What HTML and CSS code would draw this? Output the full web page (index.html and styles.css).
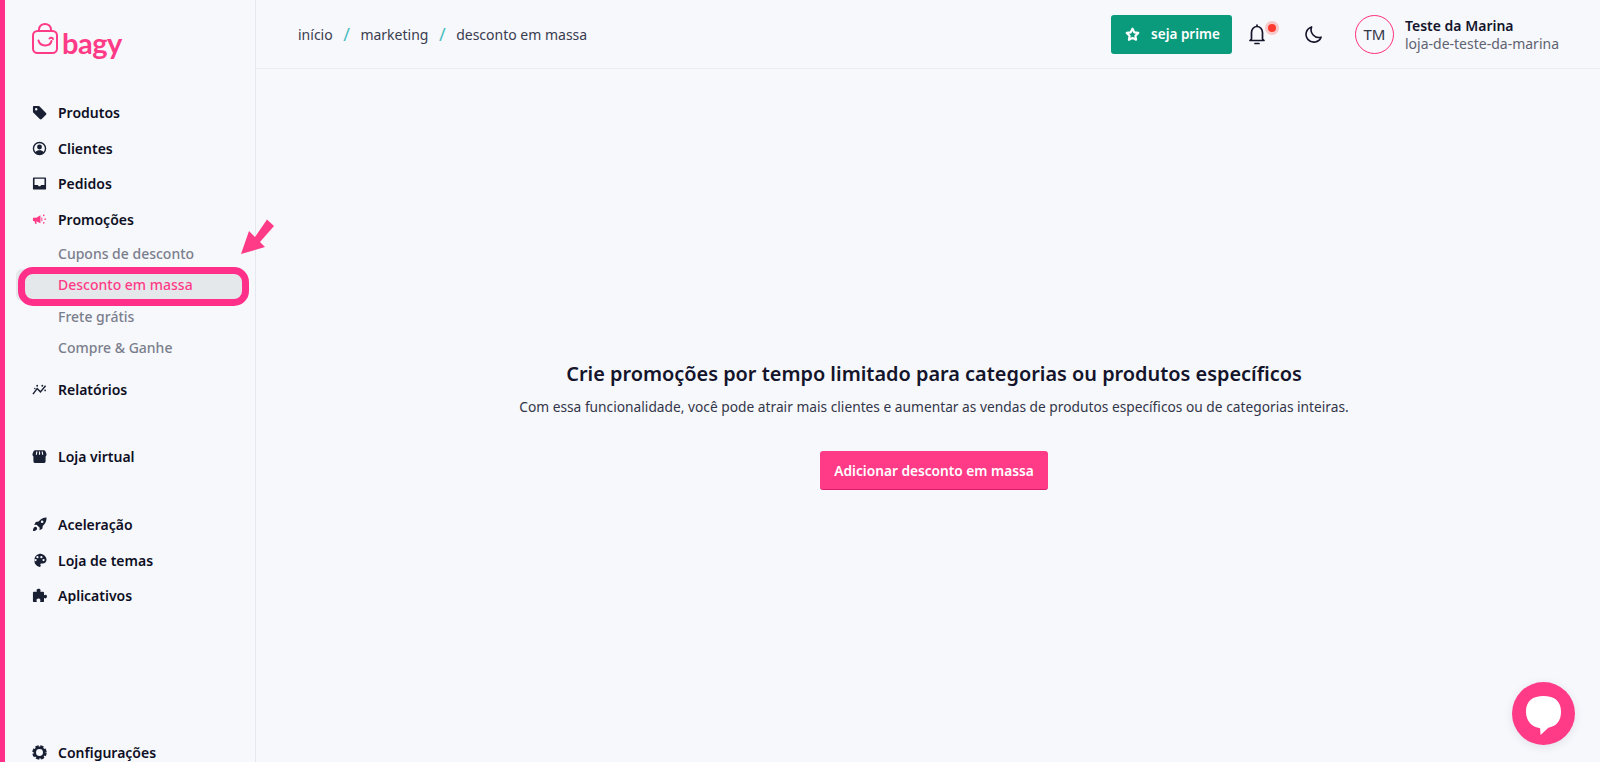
FILE: index.html
```html
<!DOCTYPE html>
<html lang="pt-BR">
<head>
<meta charset="utf-8">
<title>Desconto em massa</title>
<link rel="stylesheet" href="styles.css">
</head>
<body>
<div class="app">
  <aside class="sidebar">
    <div class="logo">
      <svg class="logo-bag" viewBox="0 0 26 31" fill="none" stroke="currentColor" stroke-width="2" stroke-linecap="round">
        <rect x="1" y="8" width="24" height="22" rx="4.5"/>
        <path d="M7 8V6.5a6 5.5 0 0 1 12 0V8"/>
        <path d="M6.5 17.5c1.5 6.5 11.500 6.500 13 .5"/>
        <path d="M17.500 15.500a2 2 0 0 1 3.500.5"/>
      </svg>
      <span class="logo-word">bagy</span>
    </div>

    <nav class="nav-group">
      <a class="nav-item">
        <svg class="nav-icon" viewBox="0 0 16 16"><path fill-rule="evenodd" d="M1.800 1h5a1.500 1.500 0 0 1 1.100.4l7 7a1.500 1.500 0 0 1 0 2.100l-4.500 4.500a1.500 1.500 0 0 1-2.100 0l-7-7A1.500 1.500 0 0 1 1 6.900V1.800A.8.8 0 0 1 1.800 1zM4.500 3.200a1.300 1.300 0 1 0 0 2.600 1.300 1.300 0 0 0 0-2.600z"/></svg>
        Produtos
      </a>
      <a class="nav-item">
        <svg class="nav-icon" viewBox="0 0 16 16"><path fill-rule="evenodd" d="M8 .8a7.200 7.200 0 1 1 0 14.400A7.200 7.200 0 0 1 8 .8zm0 1.600a5.600 5.600 0 0 0-4.300 9.200C4.600 10.400 6.200 9.800 8 9.800s3.400.6 4.300 1.800A5.600 5.600 0 0 0 8 2.400zm0 1.400a2.600 2.600 0 1 1 0 5.200 2.600 2.600 0 0 1 0-5.200z"/></svg>
        Clientes
      </a>
      <a class="nav-item">
        <svg class="nav-icon" viewBox="0 0 16 16"><path fill-rule="evenodd" d="M2 1.500h12a1 1 0 0 1 1 1v11a1 1 0 0 1-1 1H2a1 1 0 0 1-1-1v-11a1 1 0 0 1 1-1zM2.700 3v6.500h3.500l1 1.500h1.600l1-1.500h3.500V3z"/></svg>
        Pedidos
      </a>
      <a class="nav-item">
        <svg class="nav-icon nav-icon-pink" viewBox="0 0 16 16"><path d="M1 6h3.500L9 3.500v8.500L4.500 9.800l.6 2.700H3.300l-.7-2.800H1zM10 5.500l1 .5v3.500l-1 .5z"/><circle cx="12.500" cy="3.500" r=".9"/><circle cx="14" cy="7.500" r=".9"/><circle cx="12.500" cy="11.500" r=".9"/></svg>
        Promoções
      </a>
      <div class="sub-list">
        <a class="sub-item">Cupons de desconto</a>
        <a class="sub-item sub-item-active">Desconto em massa</a>
        <a class="sub-item">Frete grátis</a>
        <a class="sub-item">Compre &amp; Ganhe</a>
      </div>
      <a class="nav-item nav-item-after-sub">
        <svg class="nav-icon" viewBox="0 0 16 16"><path d="M1 13l4.500-6 3.500 3.500L14.500 4" fill="none" stroke="currentColor" stroke-width="1.500"/><circle cx="5.500" cy="4" r="1"/><circle cx="11" cy="4" r="1"/><circle cx="3" cy="7" r=".8"/><circle cx="14" cy="9" r=".9"/></svg>
        Relatórios
      </a>
    </nav>

    <nav class="nav-group nav-group-spaced">
      <a class="nav-item">
        <svg class="nav-icon" viewBox="0 0 16 16"><path fill-rule="evenodd" d="M3.500 1.200h9a2 2 0 0 1 1.800 1.200l1.200 3a2.300 2.300 0 0 1-1 2.500V13a2 2 0 0 1-2 2h-9a2 2 0 0 1-2-2V7.900a2.300 2.300 0 0 1-1-2.500l1.200-3a2 2 0 0 1 1.800-1.200zM4.500 2.600L4 6h1.300l.4-3.400zM7.400 2.600V6h1.200V2.600zM10.300 2.600l.4 3.400H12l-.5-3.400z"/></svg>
        Loja virtual
      </a>
    </nav>

    <nav class="nav-group nav-group-wide">
      <a class="nav-item">
        <svg class="nav-icon" viewBox="0 0 16 16"><path fill-rule="evenodd" d="M15.500.6c.2 3.500-1 6.500-4 9l-.5 3-3 1.600.2-2.700-3.300-3.300-2.500.2L4 5.400l3-.5C9.500 1.900 12.300.5 15.500.6zM10.800 3.700a1.400 1.400 0 1 0 0 2.800 1.400 1.400 0 0 0 0-2.800z"/><path d="M3.500 10.500a2 2 0 0 1 2 2c-.3 1.700-2.500 2.500-4.500 2.500 0-2 .8-4.200 2.500-4.500z"/></svg>
        Aceleração
      </a>
      <a class="nav-item">
        <svg class="nav-icon" viewBox="0 0 16 16"><path fill-rule="evenodd" d="M8 .8c4.200 0 7.500 2.900 7.500 6.500 0 2.500-2 3.900-4 3.900H9.800c-.8 0-1.200.9-.7 1.500.5.700.2 2.100-1.100 2.100a7.200 7.200 0 0 1 0-14zM3.800 6.300a1.200 1.200 0 1 0 0 2.400 1.200 1.200 0 0 0 0-2.400zM5.800 3.200a1.200 1.200 0 1 0 0 2.400 1.200 1.200 0 0 0 0-2.400zM10 3.200a1.200 1.200 0 1 0 0 2.400 1.200 1.200 0 0 0 0-2.400zM12.300 6.300a1.200 1.200 0 1 0 0 2.400 1.200 1.200 0 0 0 0-2.400z"/></svg>
        Loja de temas
      </a>
      <a class="nav-item">
        <svg class="nav-icon" viewBox="0 0 16 16"><path d="M6 1c1.500-.7 3.200 0 3.200 1.400 0 .6-.4 1-.4 1.600h3c.6 0 1 .4 1 1v2.600c.5 0 .9-.4 1.500-.4 1.300 0 1.900 1.200 1.600 2.500-.3 1.400-1.900 1.800-2.800 1-.1 0-.3 0-.3.200V14c0 .6-.4 1-1 1H8.500c0-.6.500-1 .5-1.800 0-1.400-1.100-2-2.200-2S4.800 12 4.800 13.200c0 .7.400 1.200.5 1.800H2c-.6 0-1-.4-1-1V5c0-.6.400-1 1-1h3.200c0-.6-.4-1-.4-1.500 0-.6.600-1.200 1.200-1.500z"/></svg>
        Aplicativos
      </a>
    </nav>

    <nav class="nav-group nav-group-bottom">
      <a class="nav-item">
        <svg class="nav-icon" viewBox="0 0 16 16"><circle cx="8" cy="8" r="5" fill="none" stroke="currentColor" stroke-width="2.600"/><circle cx="8" cy="8" r="6.500" fill="none" stroke="currentColor" stroke-width="2.400" stroke-dasharray="3.500 1.605"/></svg>
        Configurações
      </a>
    </nav>
  </aside>

  <div class="main">
    <header class="topbar">
      <ol class="breadcrumb">
        <li>início</li>
        <li class="crumb-sep">/</li>
        <li>marketing</li>
        <li class="crumb-sep">/</li>
        <li>desconto em massa</li>
      </ol>
      <div class="topbar-actions">
        <a class="prime-button">
          <svg class="prime-icon" viewBox="0 0 16 16" fill="none" stroke="currentColor" stroke-width="2.300" stroke-linejoin="round"><path d="M8 1.800l1.900 3.900 4.300.6-3.100 3 .7 4.300L8 11.600l-3.800 2 .7-4.300-3.100-3 4.300-.6z"/></svg>
          seja prime
        </a>
        <span class="bell">
          <svg class="bell-icon" viewBox="0 0 18 22" fill="none" stroke="currentColor" stroke-width="1.700" stroke-linecap="round" stroke-linejoin="round"><path d="M9 2v1.500M3.500 16V9.500a5.500 6 0 0 1 11 0V16l1.500 1.500H2z"/><path d="M7 20.500h4"/></svg>
          <span class="bell-dot"></span>
        </span>
        <svg class="moon-icon" viewBox="0 0 20 20" fill="none" stroke="currentColor" stroke-width="1.700" stroke-linejoin="round"><path d="M8 2a8.200 8.200 0 0 0 10 10.800A8.200 8.200 0 1 1 8 2z"/></svg>
        <div class="account">
          <span class="avatar">TM</span>
          <div class="account-text">
            <span class="account-name">Teste da Marina</span>
            <span class="account-store">loja-de-teste-da-marina</span>
          </div>
        </div>
      </div>
    </header>

    <main class="content">
      <h1 class="empty-title">Crie promoções por tempo limitado para categorias ou produtos específicos</h1>
      <p class="empty-text">Com essa funcionalidade, você pode atrair mais clientes e aumentar as vendas de produtos específicos ou de categorias inteiras.</p>
      <a class="add-button">Adicionar desconto em massa</a>
    </main>
  </div>
</div>

<svg class="arrow" viewBox="0 0 40 40"><polygon points="1,36 9,13 15,19 27,1.500 34,8 20,24 25,29"/></svg>

<div class="chat-bubble">
  <svg class="chat-icon" viewBox="0 0 38 42"><path d="M19 1c11 0 18 5 18 16 0 9-4 15-13 16.500l-8 7.500-.5-7C7 33 1 27 1 17 1 6 8 1 19 1z"/></svg>
</div>
</body>
</html>
```

FILE: styles.css
```css
* { box-sizing: border-box; }

html, body {
  margin: 0;
  height: 100%;
  overflow: hidden;
}

body {
  background: #f6f8fc;
  color: #14142b;
  font-family: "Noto Sans", "Open Sans", sans-serif;
  font-size: 14px;
}

.app {
  display: flex;
  height: 762px;
}

.sidebar {
  display: flex;
  flex-direction: column;
  flex: 0 0 256px;
  height: 762px;
  overflow: hidden;
  padding-left: 27px;
  background: #f6f8fc;
  border-left: 5px solid #ff2f8a;
  border-right: 1px solid #e5e8ee;
}

.logo {
  display: flex;
  flex: none;
  align-items: flex-start;
  gap: 4px;
  height: 95px;
  padding-top: 23px;
  color: #ff3b87;
}

.logo-bag {
  width: 26px;
  height: 31px;
  flex: none;
}

.logo-word {
  margin-top: 2px;
  font-family: "Lato", sans-serif;
  font-size: 29px;
  font-weight: 700;
  line-height: 36px;
  letter-spacing: -0.5px;
}

.nav-group {
  display: flex;
  flex-direction: column;
  flex: none;
}

.nav-group-spaced { margin-top: 31px; }
.nav-group-wide { margin-top: 33px; }
.nav-group-bottom { margin-top: 121px; }

.nav-item {
  display: flex;
  align-items: center;
  gap: 11px;
  height: 35.5px;
  font-weight: 600;
  color: #0f0f24;
}

.nav-item-after-sub { margin-top: 9px; }

.nav-icon {
  width: 15px;
  height: 15px;
  flex: none;
  fill: #1a2033;
  color: #1a2033;
}

.nav-icon-pink { fill: #ff3b87; }

.sub-list {
  display: flex;
  flex-direction: column;
  margin-top: 1px;
}

.sub-item {
  display: flex;
  align-items: center;
  height: 31.3px;
  padding-left: 26px;
  color: #7b7e8c;
  font-weight: 500;
}

.sub-item-active {
  position: relative;
  margin-left: -16px;
  margin-right: 9px;
  padding-left: 42px;
  border-radius: 6px;
  background: #e5e8eb;
  color: #ff3b87;
}

.sub-item-active::after {
  content: "";
  position: absolute;
  top: -2px;
  right: -3px;
  bottom: -5px;
  left: 2px;
  border: 7px solid #ff2f8a;
  border-radius: 15px;
}

.main {
  display: flex;
  flex-direction: column;
  flex: 1;
  min-width: 0;
}

.topbar {
  display: flex;
  align-items: center;
  justify-content: space-between;
  flex: 0 0 69px;
  padding: 0 41px 0 42px;
  border-bottom: 1px solid #e9ecf1;
}

.breadcrumb {
  display: flex;
  align-items: center;
  gap: 10.5px;
  margin: 0;
  padding: 0;
  list-style: none;
  color: #3a3c50;
}

.crumb-sep {
  color: #4bbdc0;
  font-size: 18px;
}

.topbar-actions {
  display: flex;
  align-items: center;
}

.prime-button {
  display: flex;
  align-items: center;
  justify-content: center;
  gap: 11px;
  width: 121px;
  height: 39px;
  padding-left: 2px;
  border-radius: 3px;
  background: #0a9b7d;
  color: #ffffff;
  font-size: 13.500px;
  font-weight: 600;
}

.prime-icon {
  width: 15px;
  height: 15px;
}

.bell {
  position: relative;
  display: flex;
  margin-left: 16px;
  color: #14142b;
}

.bell-icon {
  width: 18px;
  height: 22px;
}

.bell-dot {
  position: absolute;
  top: 1px;
  left: 20px;
  width: 8px;
  height: 8px;
  border-radius: 50%;
  background: #ff3b2f;
  box-shadow: 0 0 0 3px rgba(255, 59, 47, 0.25);
}

.moon-icon {
  width: 19px;
  height: 19px;
  margin-left: 38px;
  color: #14142b;
}

.account {
  display: flex;
  align-items: center;
  gap: 11px;
  margin-left: 32px;
}

.avatar {
  display: flex;
  align-items: center;
  justify-content: center;
  width: 39px;
  height: 39px;
  border: 1.500px solid #ff2f78;
  border-radius: 50%;
  color: #333648;
  font-size: 15px;
}

.account-text {
  display: flex;
  flex-direction: column;
}

.account-name {
  font-weight: 600;
  line-height: 18px;
}

.account-store {
  color: #5f6270;
  line-height: 17px;
}

.content {
  display: flex;
  flex-direction: column;
  align-items: center;
  flex: 1;
  padding: 292px 0 0 12px;
}

.empty-title {
  margin: 0;
  font-size: 19.900px;
  font-weight: 600;
  line-height: 26px;
  color: #14142b;
}

.empty-text {
  margin: 10px 0 0;
  color: #333648;
  font-size: 13.760px;
  line-height: 20px;
}

.add-button {
  display: flex;
  align-items: center;
  justify-content: center;
  width: 228px;
  height: 39px;
  margin-top: 34px;
  border-radius: 3px;
  border-bottom: 1px solid #d91f6a;
  background: #ff3b87;
  color: #ffffff;
  font-size: 13.700px;
  font-weight: 600;
}

.arrow {
  position: absolute;
  top: 218px;
  left: 240px;
  width: 40px;
  height: 40px;
  fill: #ff3b87;
}

.chat-bubble {
  position: absolute;
  top: 682px;
  left: 1512px;
  display: flex;
  align-items: center;
  justify-content: center;
  width: 63px;
  height: 63px;
  border-radius: 50%;
  background: #ff3b87;
  box-shadow: 0 2px 10px rgba(40, 40, 70, 0.1);
}

.chat-icon {
  width: 37px;
  height: 41px;
  margin-top: 3px;
  fill: #ffffff;
}
```
